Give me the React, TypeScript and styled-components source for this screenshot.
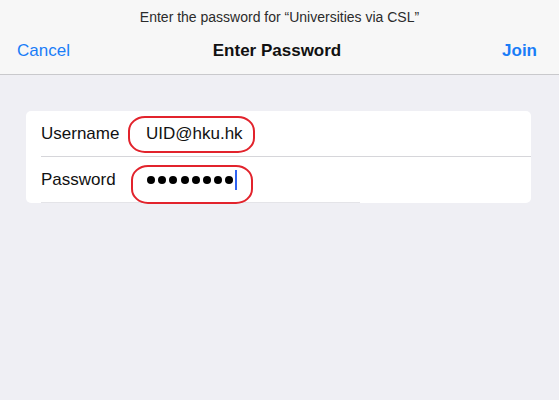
import React from "react";
import styled, { createGlobalStyle } from "styled-components";

const Global = createGlobalStyle`
  html, body { margin: 0; padding: 0; }
  body {
    width: 559px;
    height: 400px;
    overflow: hidden;
    background: #efeff4;
    font-family: "Liberation Sans", Arial, Helvetica, sans-serif;
    -webkit-font-smoothing: antialiased;
  }
`;

const Page = styled.div`
  width: 559px;
  height: 400px;
  display: flex;
  flex-direction: column;
  background: #efeff4;
`;

const Header = styled.header`
  height: 74px;
  background: #f7f7f7;
  border-bottom: 1px solid #c9c9cc;
  display: flex;
  flex-direction: column;
`;

const Prompt = styled.div`
  height: 33px;
  display: flex;
  align-items: center;
  justify-content: center;
  font-size: 14px;
  color: #2b2b2b;
`;

const NavBar = styled.div`
  flex: 1;
  display: grid;
  grid-template-columns: 1fr auto 1fr;
  align-items: center;
  padding: 0 22px 0 17px;
  padding-bottom: 5px;
`;

const NavButton = styled.span<{ $align: "left" | "right"; $bold?: boolean }>`
  font-size: 17px;
  color: #1a7df7;
  justify-self: ${(p) => (p.$align === "left" ? "start" : "end")};
  font-weight: ${(p) => (p.$bold ? 700 : 400)};
`;

const Title = styled.span`
  font-size: 17px;
  font-weight: 700;
  color: #111;
`;

const Content = styled.main`
  padding: 36px 28px 0 26px;
`;

const Card = styled.div`
  position: relative;
  background: #fff;
  border-radius: 5px;
  display: flex;
  flex-direction: column;
`;

const Row = styled.div<{ $divider?: boolean }>`
  height: 45px;
  margin-left: 15px;
  display: flex;
  align-items: center;
  border-bottom: 1px solid ${(p) => (p.$divider ? "#d6d6da" : "transparent")};
`;

const BottomLine = styled.div`
  position: absolute;
  left: 15px;
  bottom: 0;
  width: 319px;
  height: 1px;
  background: #e4e4e8;
`;

const Label = styled.span`
  width: 105px;
  font-size: 17px;
  color: #111;
  flex: none;
`;

const Value = styled.span`
  font-size: 17px;
  color: #111;
`;

const Dots = styled.div`
  display: flex;
  align-items: center;
  gap: 3.2px;
  margin-left: 1px;
`;

const Dot = styled.span`
  width: 8px;
  height: 8px;
  border-radius: 50%;
  background: #000;
`;

const Caret = styled.span`
  width: 2px;
  height: 20px;
  background: #2f63f2;
  margin-left: 2px;
`;

const Circle = styled.div<{ $left: number; $top: number; $w: number; $h: number }>`
  position: absolute;
  left: ${(p) => p.$left}px;
  top: ${(p) => p.$top}px;
  width: ${(p) => p.$w}px;
  height: ${(p) => p.$h}px;
  border: 2px solid #e2232c;
  border-radius: 17px / 15px;
  box-sizing: border-box;
  pointer-events: none;
`;

export default function App() {
  return (
    <Page>
      <Global />
      <Header>
        <Prompt>Enter the password for “Universities via CSL”</Prompt>
        <NavBar>
          <NavButton $align="left">Cancel</NavButton>
          <Title>Enter Password</Title>
          <NavButton $align="right" $bold>Join</NavButton>
        </NavBar>
      </Header>
      <Content>
        <Card>
          <Row $divider>
            <Label>Username</Label>
            <Value>UID@hku.hk</Value>
          </Row>
          <Row>
            <Label>Password</Label>
            <Dots>
              {Array.from({ length: 8 }).map((_, i) => (
                <Dot key={i} />
              ))}
            </Dots>
            <Caret />
          </Row>
          <BottomLine />
          <Circle $left={102} $top={5} $w={127} $h={37} />
          <Circle $left={105} $top={54} $w={122} $h={39} />
        </Card>
      </Content>
    </Page>
  );
}
